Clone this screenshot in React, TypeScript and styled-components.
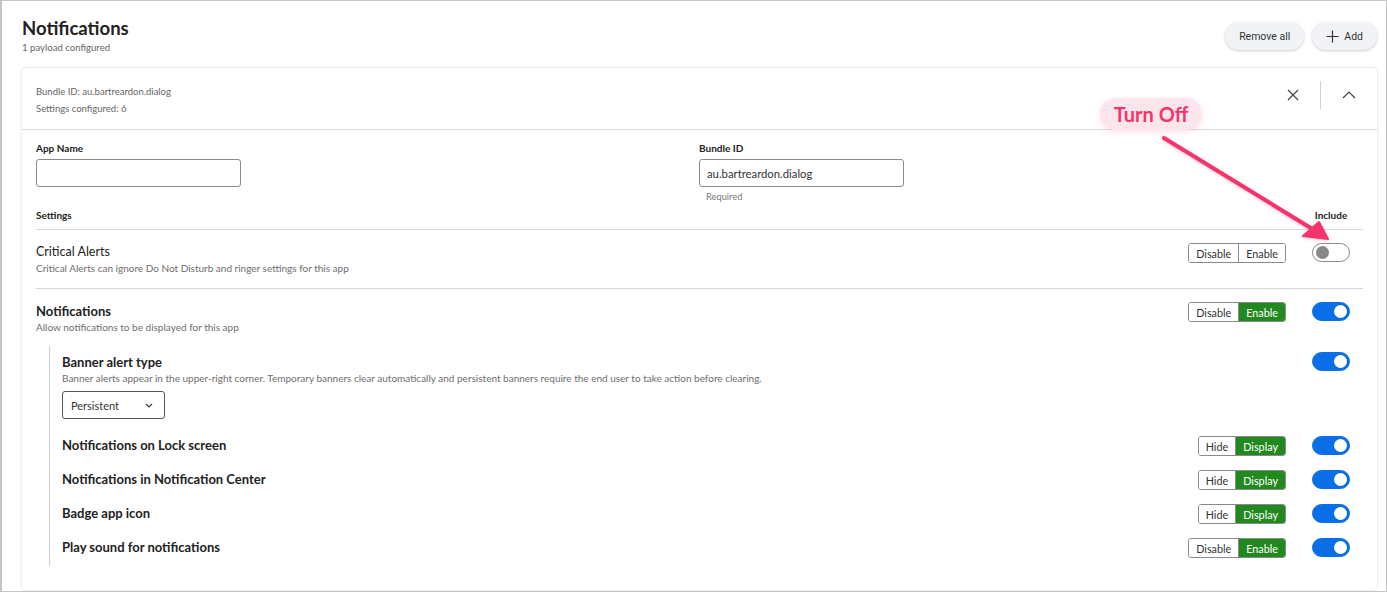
import React from 'react';
import styled, { createGlobalStyle } from 'styled-components';

const GlobalStyle = createGlobalStyle`
  * { box-sizing: border-box; }
  body {
    margin: 0;
    background: #fff;
    font-family: Lato, 'Open Sans', Arial, sans-serif;
    color: #222;
  }
`;

const Frame = styled.div`
  position: relative;
  width: 1387px;
  height: 592px;
  border: 1px solid #c4c4c4;
  border-left: 2px solid #c4c4c4;
  padding: 0 9px 0 20px;
  overflow: hidden;
`;

const PageHeader = styled.div`
  display: flex;
  justify-content: space-between;
  align-items: flex-start;
  height: 67px;
  padding-top: 16px;
`;

const Title = styled.h1`
  margin: 0;
  font-size: 18.5px;
  line-height: 22px;
  font-weight: 700;
  color: #222;
`;

const Subtitle = styled.div`
  margin-top: 3px;
  font-size: 9.6px;
  line-height: 12px;
  color: #666;
`;

const Actions = styled.div`
  display: flex;
  gap: 8px;
  margin-top: 5px;
`;

const PillButton = styled.button`
  display: flex;
  align-items: center;
  gap: 5px;
  height: 28px;
  padding: 0 14px;
  border: none;
  border-radius: 14px;
  background: #f1f3f6;
  box-shadow: 0 1px 3px rgba(0, 0, 0, 0.2);
  font-family: Roboto, Arial, sans-serif;
  font-size: 10.5px;
  color: #333;
`;

const Card = styled.div`
  background: #fff;
  border-radius: 4px;
  box-shadow: 0 0 3px rgba(0, 0, 0, 0.18);
  height: 522px;
`;

const CardHeader = styled.div`
  display: flex;
  justify-content: space-between;
  align-items: flex-start;
  height: 62px;
  padding: 0 14px;
  border-bottom: 1px solid #dcdcdc;
`;

const Meta = styled.div`
  font-size: 9.5px;
  color: #666;
  line-height: 17px;
  padding-top: 15px;
`;

const HeaderTools = styled.div`
  display: flex;
  align-items: center;
  height: 28px;
  margin-top: 13px;
`;

const IconButton = styled.span`
  display: flex;
  align-items: center;
  justify-content: center;
  width: 28px;
  height: 28px;
  color: #444;
`;

const VDivider = styled.span`
  width: 1px;
  height: 28px;
  background: #d2d2d2;
  margin: 0 14px 0 13px;
`;

const CardBody = styled.div`
  padding: 12px 14px 0;
`;

const FieldsRow = styled.div`
  display: grid;
  grid-template-columns: 663px 1fr;
`;

const Field = styled.div`
  display: flex;
  flex-direction: column;
`;

const Label = styled.div`
  font-size: 10px;
  font-weight: 700;
  line-height: 12px;
  color: #222;
`;

const FieldLabel = styled(Label)`
  margin-bottom: 5px;
`;

const Input = styled.div`
  width: 205px;
  height: 28px;
  border: 1px solid #8a8a8a;
  border-radius: 3px;
  padding: 0 7px;
  display: flex;
  align-items: center;
  font-size: 11.3px;
  color: #333;
`;

const Hint = styled.div`
  font-size: 9.3px;
  line-height: 12px;
  color: #777;
  padding: 4px 0 0 7px;
`;

const SettingsHead = styled.div`
  display: flex;
  justify-content: space-between;
  align-items: center;
  padding: 6px 0 8px;
  border-bottom: 1px solid #d6d6d6;
`;

const IncludeLabel = styled(Label)`
  width: 38px;
  margin-right: 13px;
  white-space: nowrap;
  display: flex;
  justify-content: center;
`;

const SettingRow = styled.div<{ $divider?: boolean; $pad?: string }>`
  display: flex;
  align-items: flex-start;
  padding: ${(p) => p.$pad || '0'};
  border-bottom: ${(p) => (p.$divider ? '1px solid #d6d6d6' : 'none')};
`;

const SubRow = styled(SettingRow)`
  padding-bottom: 13px;
  &:last-child {
    padding-bottom: 8px;
  }
`;

const SettingText = styled.div`
  flex: 1;
`;

const SettingTitle = styled.div<{ $bold?: boolean; $tall?: boolean }>`
  font-size: ${(p) => (p.$bold ? '13px' : '12.5px')};
  font-weight: ${(p) => (p.$bold ? 700 : 400)};
  color: #222;
  line-height: ${(p) => (p.$tall ? '20px' : '16px')};
`;

const SettingDesc = styled.div`
  font-size: 10px;
  line-height: 12px;
  color: #6e6e6e;
  margin-top: 2px;
`;

const Control = styled.div<{ $shift?: number }>`
  margin-right: 14px;
  margin-top: ${(p) => p.$shift ?? 0}px;
`;

const ToggleCell = styled.div<{ $shift?: number }>`
  width: 63px;
  display: flex;
  justify-content: flex-end;
  padding-right: 13px;
  margin-top: ${(p) => p.$shift ?? 0}px;
`;

const Segmented = styled.div`
  display: flex;
  height: 20px;
  border: 1px solid #8a8a8a;
  border-radius: 3px;
  overflow: hidden;
`;

const Segment = styled.span<{ $on?: boolean }>`
  display: flex;
  align-items: center;
  padding: 0 7px;
  font-size: 10.8px;
  color: ${(p) => (p.$on ? '#fff' : '#333')};
  background: ${(p) => (p.$on ? '#22891f' : '#fff')};
  & + & {
    border-left: 1px solid #8a8a8a;
  }
`;

const Toggle = styled.span<{ $on?: boolean }>`
  position: relative;
  display: block;
  width: 38px;
  height: 19px;
  border-radius: 10px;
  background: ${(p) => (p.$on ? '#0a6ee6' : '#fff')};
  border: 1px solid ${(p) => (p.$on ? '#0a6ee6' : '#8a8a8a')};
  &::after {
    content: '';
    position: absolute;
    top: 2px;
    left: ${(p) => (p.$on ? '21px' : '3px')};
    width: 13px;
    height: 13px;
    border-radius: 50%;
    background: ${(p) => (p.$on ? '#fff' : '#888')};
  }
`;

const Nested = styled.div`
  margin-left: 13px;
  border-left: 1px solid #d0d0d0;
  padding-left: 12px;
  padding-top: 8px;
`;

const Select = styled.div`
  width: 103px;
  height: 28px;
  margin-top: 7px;
  border: 1px solid #555;
  border-radius: 3px;
  padding: 0 11px 0 8px;
  display: flex;
  align-items: center;
  justify-content: space-between;
  font-size: 11px;
  color: #333;
`;

const Callout = styled.div`
  position: absolute;
  left: 1098px;
  top: 97px;
  width: 102px;
  height: 32px;
  border-radius: 16px;
  background: #fde6eb;
  box-shadow: 0 2px 6px rgba(240, 48, 108, 0.15);
  display: flex;
  align-items: center;
  justify-content: center;
  font-size: 20px;
  font-weight: 700;
  color: #f2356c;
`;

const ArrowLayer = styled.svg`
  position: absolute;
  left: 0;
  top: 0;
  pointer-events: none;
`;

const Close = () => (
  <svg width="12" height="12" viewBox="0 0 12 12">
    <path d="M1 1L11 11M11 1L1 11" stroke="#444" strokeWidth="1.2" fill="none" />
  </svg>
);

const ChevronUp = () => (
  <svg width="14" height="8" viewBox="0 0 14 8">
    <path d="M1 7L7 1L13 7" stroke="#444" strokeWidth="1.2" fill="none" />
  </svg>
);

const ChevronDown = () => (
  <svg width="8" height="5" viewBox="0 0 8 5">
    <path d="M1 1L4 4L7 1" stroke="#333" strokeWidth="1.1" fill="none" />
  </svg>
);

const Plus = () => (
  <svg width="13" height="13" viewBox="0 0 13 13">
    <path d="M6.5 0.5V12.5M0.5 6.5H12.5" stroke="#333" strokeWidth="1.2" fill="none" />
  </svg>
);

function Choice({ kind, on }: { kind: 'ed' | 'hd'; on: boolean }) {
  const [a, b] = kind === 'ed' ? ['Disable', 'Enable'] : ['Hide', 'Display'];
  return (
    <Segmented>
      <Segment>{a}</Segment>
      <Segment $on={on}>{b}</Segment>
    </Segmented>
  );
}

const subItems: { title: string; kind: 'ed' | 'hd' }[] = [
  { title: 'Notifications on Lock screen', kind: 'hd' },
  { title: 'Notifications in Notification Center', kind: 'hd' },
  { title: 'Badge app icon', kind: 'hd' },
  { title: 'Play sound for notifications', kind: 'ed' },
];

export default function App() {
  return (
    <>
      <GlobalStyle />
      <Frame>
        <PageHeader>
          <div>
            <Title>Notifications</Title>
            <Subtitle>1 payload configured</Subtitle>
          </div>
          <Actions>
            <PillButton>Remove all</PillButton>
            <PillButton>
              <Plus />
              Add
            </PillButton>
          </Actions>
        </PageHeader>

        <Card>
          <CardHeader>
            <Meta>
              <div>Bundle ID: au.bartreardon.dialog</div>
              <div>Settings configured: 6</div>
            </Meta>
            <HeaderTools>
              <IconButton>
                <Close />
              </IconButton>
              <VDivider />
              <IconButton>
                <ChevronUp />
              </IconButton>
            </HeaderTools>
          </CardHeader>

          <CardBody>
            <FieldsRow>
              <Field>
                <FieldLabel>App Name</FieldLabel>
                <Input />
              </Field>
              <Field>
                <FieldLabel>Bundle ID</FieldLabel>
                <Input>au.bartreardon.dialog</Input>
                <Hint>Required</Hint>
              </Field>
            </FieldsRow>

            <SettingsHead>
              <Label>Settings</Label>
              <IncludeLabel>Include</IncludeLabel>
            </SettingsHead>

            <SettingRow $divider $pad="14px 0 14px">
              <SettingText>
                <SettingTitle>Critical Alerts</SettingTitle>
                <SettingDesc>Critical Alerts can ignore Do Not Disturb and ringer settings for this app</SettingDesc>
              </SettingText>
              <Control $shift={-1}>
                <Choice kind="ed" on={false} />
              </Control>
              <ToggleCell $shift={-1}>
                <Toggle />
              </ToggleCell>
            </SettingRow>

            <SettingRow $pad="14px 0 13px">
              <SettingText>
                <SettingTitle $bold>Notifications</SettingTitle>
                <SettingDesc>Allow notifications to be displayed for this app</SettingDesc>
              </SettingText>
              <Control $shift={-1}>
                <Choice kind="ed" on />
              </Control>
              <ToggleCell $shift={-1}>
                <Toggle $on />
              </ToggleCell>
            </SettingRow>

            <Nested>
              <SettingRow $pad="0 0 16px">
                <SettingText>
                  <SettingTitle $bold>Banner alert type</SettingTitle>
                  <SettingDesc>
                    Banner alerts appear in the upper-right corner. Temporary banners clear automatically and persistent banners require the end user to take action before clearing.
                  </SettingDesc>
                  <Select>
                    Persistent
                    <ChevronDown />
                  </Select>
                </SettingText>
                <ToggleCell $shift={-2}>
                  <Toggle $on />
                </ToggleCell>
              </SettingRow>
              {subItems.map((s) => (
                <SubRow key={s.title}>
                  <SettingText>
                    <SettingTitle $bold $tall>
                      {s.title}
                    </SettingTitle>
                  </SettingText>
                  <Control $shift={1}>
                    <Choice kind={s.kind} on />
                  </Control>
                  <ToggleCell $shift={1}>
                    <Toggle $on />
                  </ToggleCell>
                </SubRow>
              ))}
            </Nested>
          </CardBody>
        </Card>

        <Callout>Turn Off</Callout>
        <ArrowLayer width="1387" height="592">
          <defs>
            <filter id="sh" x="-10%" y="-10%" width="120%" height="120%">
              <feDropShadow dx="0" dy="1" stdDeviation="1.5" floodColor="#f2356c" floodOpacity="0.3" />
            </filter>
          </defs>
          <g filter="url(#sh)" fill="#f2356c" stroke="#f2356c">
            <line x1="1162" y1="137" x2="1312" y2="229" strokeWidth="4" strokeLinecap="round" />
            <path d="M1326 238 L1301 235 L1317 221 Z" strokeWidth="2" strokeLinejoin="round" />
          </g>
        </ArrowLayer>
      </Frame>
    </>
  );
}
